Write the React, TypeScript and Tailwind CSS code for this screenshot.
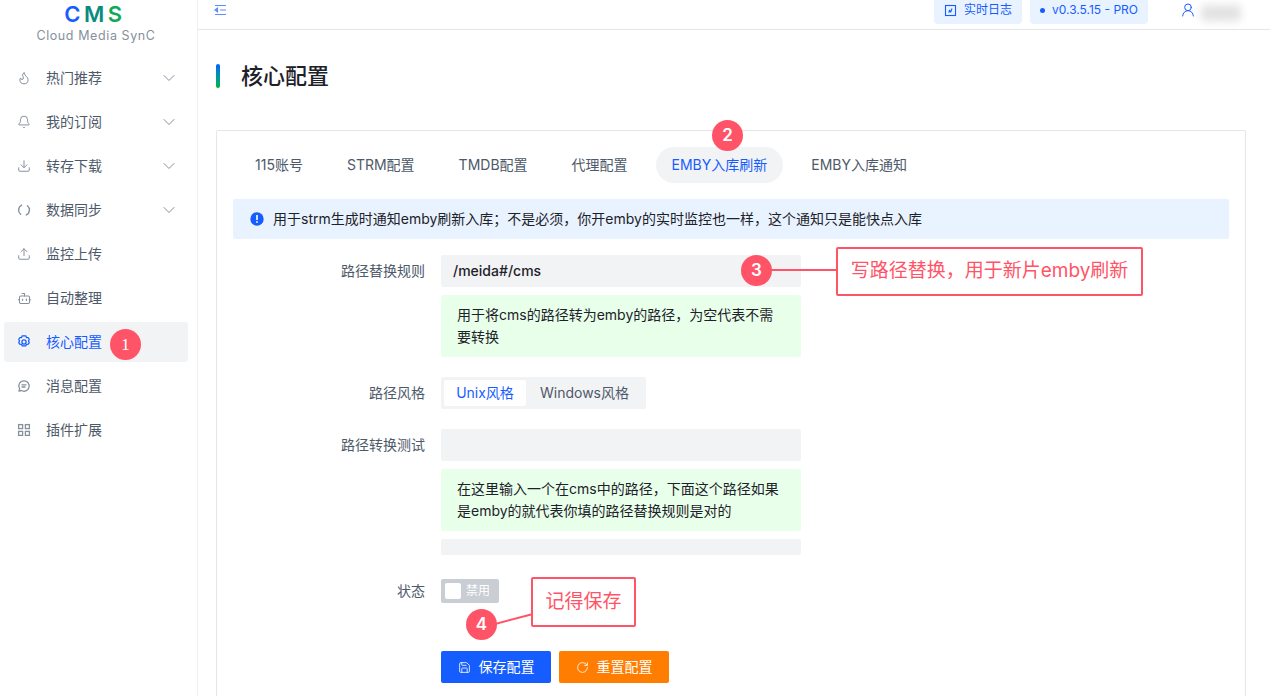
import { Bell, Bot, ChevronDown, Download, Flame, RotateCw, Save, Upload, UserRound } from "lucide-react";
import type { ReactNode } from "react";

const font = { fontFamily: "Inter, 'Noto Sans CJK SC', sans-serif" };

function SyncIcon() {
  return (
    <svg width="14" height="14" viewBox="0 0 14 14" fill="none" stroke="currentColor" strokeWidth="1.4" strokeLinecap="round">
      <path d="M4.6 2.1A5.4 5.4 0 0 0 3.6 11.2" />
      <path d="M9.4 11.9A5.4 5.4 0 0 0 10.4 2.8" />
    </svg>
  );
}

function GearIcon() {
  return (
    <svg width="14" height="14" viewBox="0.6 0.6 12.8 12.8" fill="none" stroke="currentColor" strokeWidth="1.15" strokeLinejoin="round">
      <path d="M5.4 1.4h3.2l.7 1.5 1.6.2.9 1.4-.7 1.5.7 1.5-.9 1.4-1.6.2-.7 1.5H5.4l-.7-1.5-1.6-.2-.9-1.4.7-1.5-.7-1.5.9-1.4 1.6-.2z" />
      <circle cx="7" cy="7" r="1.9" />
    </svg>
  );
}

function ChatIcon() {
  return (
    <svg width="14" height="14" viewBox="0 0 14 14" fill="none" stroke="currentColor" strokeWidth="1.3" strokeLinecap="round">
      <path d="M7 1.8a5.2 5.2 0 1 1-2.6 9.7l-2.4.6.6-2.3A5.2 5.2 0 0 1 7 1.8z" strokeLinejoin="round" />
      <path d="M5 5.8h4M5 8h3" />
    </svg>
  );
}

function GridIcon() {
  return (
    <svg width="14" height="14" viewBox="0 0 14 14" fill="none" stroke="currentColor" strokeWidth="1.3">
      <rect x="1.6" y="1.6" width="4" height="4" />
      <rect x="8.4" y="1.6" width="4" height="4" />
      <rect x="1.6" y="8.4" width="4" height="4" />
      <rect x="8.4" y="8.4" width="4" height="4" />
    </svg>
  );
}

const menu: { label: string; icon: ReactNode; arrow?: boolean; active?: boolean }[] = [
  { label: "热门推荐", icon: <Flame size={14} strokeWidth={1.7} />, arrow: true },
  { label: "我的订阅", icon: <Bell size={14} strokeWidth={1.7} />, arrow: true },
  { label: "转存下载", icon: <Download size={14} strokeWidth={1.7} />, arrow: true },
  { label: "数据同步", icon: <SyncIcon />, arrow: true },
  { label: "监控上传", icon: <Upload size={14} strokeWidth={1.7} /> },
  { label: "自动整理", icon: <Bot size={15} strokeWidth={1.7} /> },
  { label: "核心配置", icon: <GearIcon />, active: true },
  { label: "消息配置", icon: <ChatIcon /> },
  { label: "插件扩展", icon: <GridIcon /> },
];

const tabs = ["115账号", "STRM配置", "TMDB配置", "代理配置", "EMBY入库刷新", "EMBY入库通知"];

function Marker({ n, className }: { n: number; className: string }) {
  return (
    <div className={`absolute flex h-[31px] w-[31px] items-center justify-center rounded-full bg-[#ff5468] text-[17px] text-white ${className}`}>
      {n}
    </div>
  );
}

function Row({ label, children, className = "", labelClass = "pt-[6px]" }: { label?: string; children: ReactNode; className?: string; labelClass?: string }) {
  return (
    <div className={`flex ${className}`}>
      <div className={`w-[208px] pr-4 text-right text-[14px] leading-5 text-[#4e5969] ${labelClass}`}>{label}</div>
      <div className="w-[360px]">{children}</div>
    </div>
  );
}

function Hint({ children }: { children: ReactNode }) {
  return <div className="mt-2 rounded-[2px] bg-[#e8ffea] px-4 py-[9px] text-[14px] leading-[22px] text-[#1d2129]">{children}</div>;
}

export default function App() {
  return (
    <div className="relative flex h-[696px] w-[1270px] overflow-hidden bg-white" style={font}>
      <aside className="h-full w-[198px] shrink-0 border-r border-[#eef0f3] bg-white">
        <div className="flex h-[58px] flex-col items-center pr-[5px]">
          <div
            className="-ml-[2px] mt-[1px] flex text-[22px] font-semibold leading-[26px] tracking-[3.5px]"
            style={{ fontFamily: "Inter, sans-serif" }}
          >
            <span className="text-[#165dff]">C</span>
            <span className="text-[#0a8a80]">M</span>
            <span className="text-[#0fa958]">S</span>
          </div>
          <div className="mt-[1px] text-[12.5px] leading-[16px] tracking-[0.6px] text-[#86909c]">Cloud Media SynC</div>
        </div>
        <nav className="flex flex-col gap-1 pl-1 pr-[9px]">
          {menu.map((m) => (
            <div
              key={m.label}
              className={`flex h-10 items-center rounded-[3px] pl-[13px] pr-[9px] text-[14px] leading-5 ${m.active ? "bg-[#f2f3f5] text-[#165dff]" : "text-[#4e5969]"}`}
            >
              <span className={`flex w-[29px] shrink-0 ${m.active ? "text-[#165dff]" : "text-[#86909c]"}`}>{m.icon}</span>
              <span className="flex-1">{m.label}</span>
              {m.arrow && <ChevronDown size={20} strokeWidth={1.2} className="text-[#86909c]" />}
            </div>
          ))}
        </nav>
      </aside>

      <main className="flex h-full min-w-0 flex-1 flex-col">
        <header className="flex h-[30px] shrink-0 items-center border-b border-[#e5e6eb] pl-4">
          <svg width="14" height="14" viewBox="0 0 14 14" fill="none" stroke="#5b8cff" strokeWidth="1.2" className="-mt-[10px]">
            <path d="M1 2.5h11M6 7h6M1 11.5h11" />
            <path d="M1 7l2.5-1.8v3.6z" fill="#5b8cff" />
          </svg>
          <div className="ml-auto flex h-full items-start">
            <div className="-mt-1 flex h-7 w-[88px] items-center justify-center gap-[7px] rounded-[4px] bg-[#e8f3ff] text-[12px] text-[#165dff]">
              <svg width="13" height="13" viewBox="0 0 13 13" fill="none" stroke="#165dff" strokeWidth="1.1">
                <rect x="1.5" y="1.5" width="10" height="10" />
                <path d="M4.5 8.5l1.5-1.5-1-1M8 4.5l-1.5 4" />
              </svg>
              实时日志
            </div>
            <div className="-mt-1 ml-2 flex h-7 w-[118px] items-center justify-center gap-[7px] rounded-[4px] bg-[#e8f3ff] text-[12px] text-[#165dff]">
              <span className="h-[5px] w-[5px] rounded-full bg-[#165dff]" />
              v0.3.5.15 - PRO
            </div>
            <UserRound size={16} strokeWidth={1.5} className="ml-[32px] mt-[2px] text-[#165dff]" />
            <div className="ml-[5px] mt-[5px] h-[16px] w-[40px] rounded bg-[#e2e2e2] blur-[4px]" />
            <div className="w-[29px]" />
          </div>
        </header>

        <div className="flex items-center pl-[18px] pt-[34px]">
          <span className="h-6 w-1 rounded-full bg-gradient-to-b from-[#165dff] to-[#00b42a]" />
          <h1 className="ml-[21px] text-[22px] font-medium leading-6 text-[#1d2129]">核心配置</h1>
        </div>

        <section className="ml-[18px] mr-[24px] mt-[42px] flex-1 rounded-t-[2px] border border-b-0 border-[#e5e6eb] px-4 pt-4">
          <div className="flex h-9 items-center gap-3 pl-[6px]">
            {tabs.map((t) => (
              <div
                key={t}
                className={`flex h-9 items-center rounded-full px-4 text-[14px] leading-5 ${t === "EMBY入库刷新" ? "bg-[#f2f3f5] text-[#165dff]" : "text-[#4e5969]"}`}
              >
                {t}
              </div>
            ))}
          </div>

          <div className="mt-4 flex h-10 items-center gap-[9px] rounded-[2px] bg-[#e8f3ff] pl-[17px] text-[14px] leading-5 text-[#1d2129]">
            <svg width="14" height="14" viewBox="0 0 14 14" className="shrink-0">
              <circle cx="7" cy="7" r="6.7" fill="#165dff" />
              <rect x="6.2" y="3" width="1.6" height="5" fill="#fff" />
              <rect x="6.2" y="9.2" width="1.6" height="1.6" fill="#fff" />
            </svg>
            用于strm生成时通知emby刷新入库；不是必须，你开emby的实时监控也一样，这个通知只是能快点入库
          </div>

          <Row label="路径替换规则" className="mt-4">
            <div className="flex h-8 items-center rounded-[2px] bg-[#f2f3f5] pl-3 text-[14px] font-medium leading-5 text-[#1d2129]">/meida#/cms</div>
            <Hint>用于将cms的路径转为emby的路径，为空代表不需要转换</Hint>
          </Row>

          <Row label="路径风格" className="mt-5">
            <div className="flex h-8 w-[205px] items-center rounded-[2px] bg-[#f2f3f5] px-[3px] text-[14px] leading-5 text-[#4e5969]">
              <div className="flex h-[26px] w-[82px] items-center justify-center rounded-[2px] bg-white text-[#165dff]">Unix风格</div>
              <div className="flex flex-1 items-center justify-center">Windows风格</div>
            </div>
          </Row>

          <Row label="路径转换测试" className="mt-5">
            <div className="h-8 rounded-[2px] bg-[#f2f3f5]" />
            <Hint>在这里输入一个在cms中的路径，下面这个路径如果是emby的就代表你填的路径替换规则是对的</Hint>
            <div className="mt-2 h-4 rounded-[2px] bg-[#f2f3f5]" />
          </Row>

          <Row label="状态" className="mt-6" labelClass="pt-[2px]">
            <div className="flex h-6 w-[58px] items-center rounded-[2px] bg-[#c9cdd4] pl-[4px] text-[12px] text-white">
              <span className="h-4 w-4 rounded-[2px] bg-white" />
              <span className="ml-[5px]">禁用</span>
            </div>
            <div className="mt-12 flex gap-2">
              <button className="flex h-8 w-[110px] items-center justify-center gap-2 rounded-[2px] bg-[#165dff] text-[14px] leading-5 text-white">
                <Save size={13} strokeWidth={1.5} />
                保存配置
              </button>
              <button className="flex h-8 w-[110px] items-center justify-center gap-2 rounded-[2px] bg-[#ff7d00] text-[14px] leading-5 text-white">
                <RotateCw size={13} strokeWidth={1.5} />
                重置配置
              </button>
            </div>
          </Row>
        </section>
      </main>

      <Marker n={1} className="left-[110px] top-[329px] font-['Liberation_Serif'] font-normal" />
      <Marker n={2} className="left-[712px] top-[120px] font-semibold" />
      <Marker n={3} className="left-[741px] top-[255px] font-semibold" />
      <Marker n={4} className="left-[466px] top-[609px] font-semibold" />

      <div className="absolute left-[770px] top-[269px] h-[2px] w-[68px] bg-[#ff5468]" />
      <div className="absolute left-[836px] top-[247px] flex h-[49px] w-[307px] items-center justify-center rounded-[2px] border-2 border-[#ff5468] bg-white text-[19px] text-[#ff5468]">
        写路径替换，用于新片emby刷新
      </div>

      <svg width="40" height="14" viewBox="0 0 40 14" className="absolute left-[495px] top-[612px]">
        <path d="M0 12L38 2" stroke="#ff5468" strokeWidth="2" />
      </svg>
      <div className="absolute left-[531px] top-[577px] flex h-[50px] w-[105px] items-center justify-center rounded-[2px] border-2 border-[#ff5468] bg-white text-[19px] text-[#ff5468]">
        记得保存
      </div>
    </div>
  );
}
